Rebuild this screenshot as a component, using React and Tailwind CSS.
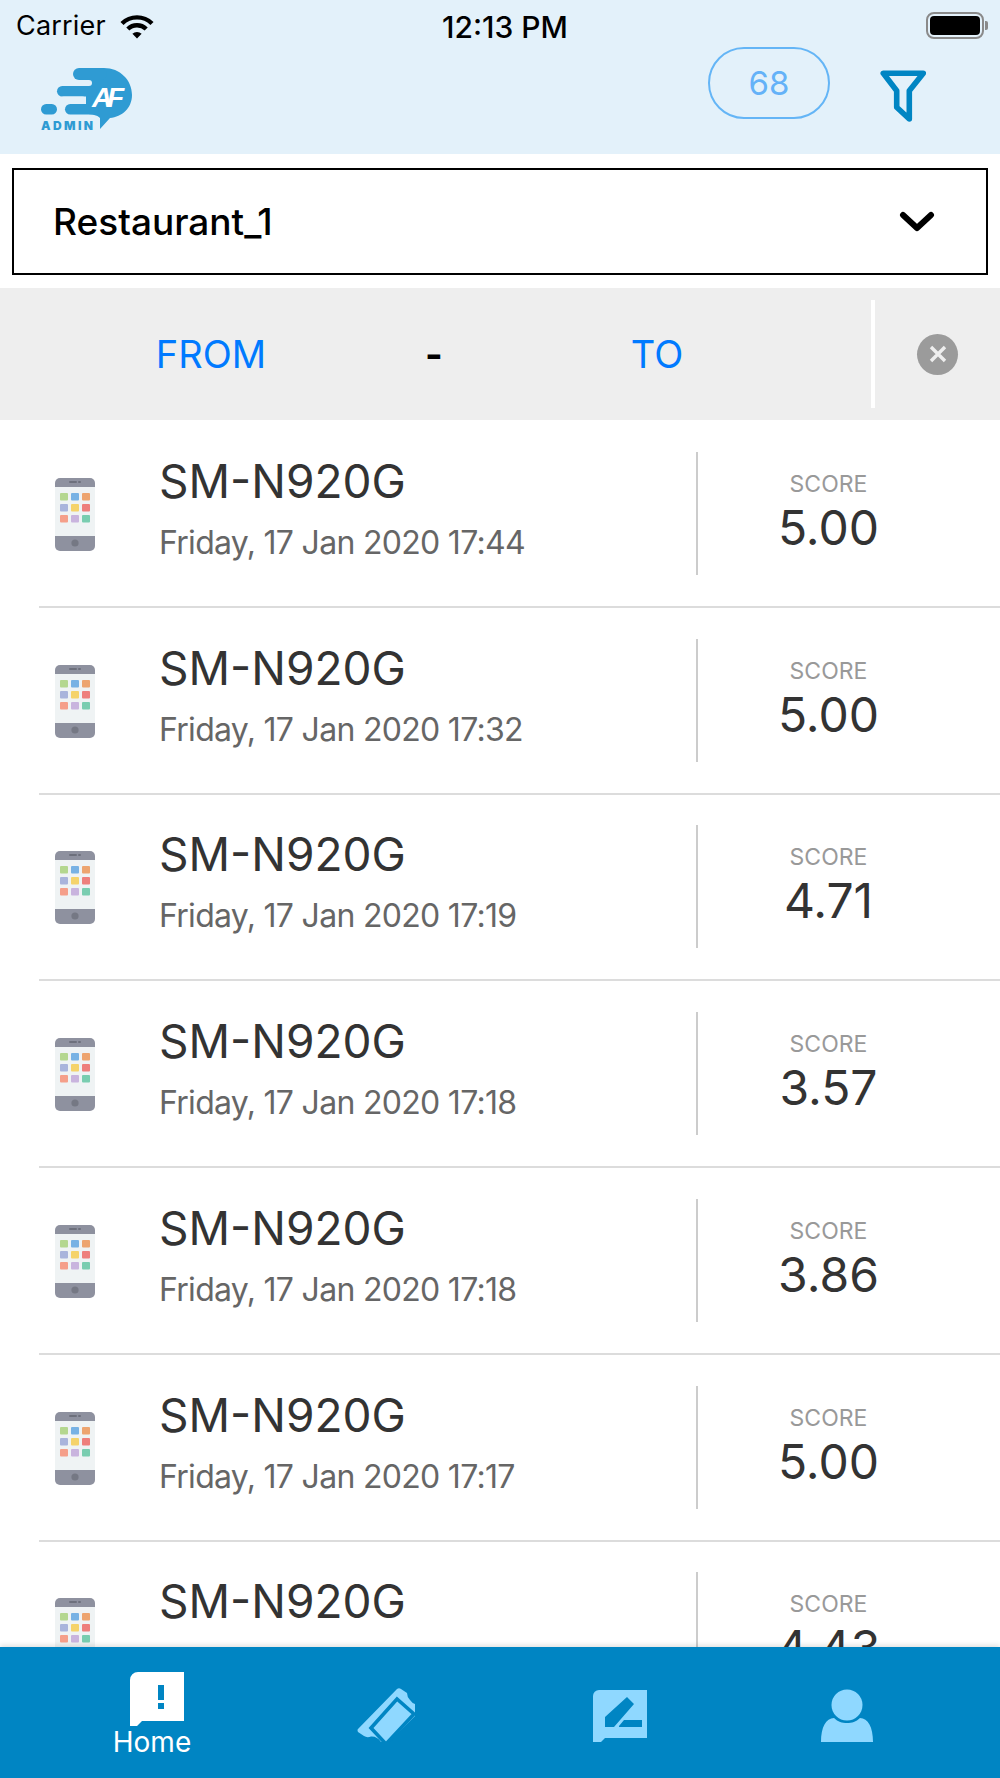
// App.jsx
import React from "react";

const FONT = "[font-family:Inter,'Noto_Sans',sans-serif]";

const DEVICES = [
  { date: "Friday, 17 Jan 2020 17:44", score: "5.00" },
  { date: "Friday, 17 Jan 2020 17:32", score: "5.00" },
  { date: "Friday, 17 Jan 2020 17:19", score: "4.71" },
  { date: "Friday, 17 Jan 2020 17:18", score: "3.57" },
  { date: "Friday, 17 Jan 2020 17:18", score: "3.86" },
  { date: "Friday, 17 Jan 2020 17:17", score: "5.00" },
  { date: "Friday, 17 Jan 2020 17:16", score: "4.43" },
];

const APP_COLORS = [
  "#b4d78f", "#78b2e4", "#eda46f",
  "#a9b4dc", "#f5d36b", "#ee7f7c",
  "#f59f8a", "#c9b4de", "#79cdb0",
];

const PhoneIcon = () => (
  <svg width="40" height="73" viewBox="0 0 40 73" className="shrink-0">
    <path d="M0 9V5a5 5 0 0 1 5-5h30a5 5 0 0 1 5 5v4z" fill="#8e919f" />
    <rect x="0" y="9" width="40" height="49" fill="#eff3f4" />
    <path d="M0 58h40v10a5 5 0 0 1-5 5H5a5 5 0 0 1-5-5z" fill="#8e919f" />
    <rect x="14" y="3" width="8" height="2" rx="1" fill="#6d707c" />
    <rect x="23" y="3" width="3" height="2" rx="1" fill="#6d707c" />
    <circle cx="20" cy="65" r="3.6" fill="#757884" />
    {APP_COLORS.map((color, i) => (
      <rect
        key={color}
        x={5 + (i % 3) * 11}
        y={15 + Math.floor(i / 3) * 11}
        width="8"
        height="7.5"
        rx="1"
        fill={color}
      />
    ))}
  </svg>
);

const Logo = () => (
  <svg width="100" height="70" viewBox="38 65 100 70" className="shrink-0">
    <g fill="#2f9bd3">
      <path d="M90 68H104C120 68 132 80 132 95C132 108 122 117 110 118L100 129V118C97 115 92 114 86 114V68Z" />
      <rect x="73" y="68" width="34" height="12" rx="6" />
      <rect x="57" y="86" width="40" height="10.5" rx="5.2" />
      <rect x="65" y="104" width="34" height="10.5" rx="5.2" />
      <rect x="41" y="104" width="16" height="10.5" rx="5.2" />
    </g>
    <rect x="60" y="80" width="32" height="6" rx="3" fill="#e3f1fa" />
    <rect x="60" y="96.5" width="26" height="7.5" rx="3.7" fill="#e3f1fa" />
    <text x="92" y="107" fontFamily="Liberation Sans" fontWeight="700" fontStyle="italic" fontSize="28" fill="#ffffff" textLength="32">AF</text>
    <text x="41" y="129.5" fontFamily="Inter" fontWeight="900" fontSize="12" fill="#2f9bd3" textLength="52">ADMIN</text>
  </svg>
);

const WifiIcon = () => (
  <svg width="34" height="25" viewBox="0 0 34 25" fill="none" stroke="#000" strokeWidth="4.4">
    <path d="M2 9.5A21.5 21.5 0 0 1 32 9.5" />
    <path d="M7.8 15A13.2 13.2 0 0 1 26.2 15" />
    <path d="M12.4 19.8L17 24.5L21.6 19.8A6.6 6.6 0 0 0 12.4 19.8Z" fill="#000" stroke="none" />
  </svg>
);

const TicketIcon = () => (
  <svg width="58" height="54" viewBox="0 0 58 54">
    <path
      fill="#8fd8ff"
      d="M1 41L40 1Q42 -0.5 44 1L50 5Q50 9 53 12Q55 15 58 16V28L32 54H24Q20 48 14 48.5Q10 50 7 48L1 44Q0 42 1 41Z"
    />
    <path d="M14 40L40 11L57 26L29 56Z" fill="none" stroke="#0085c3" strokeWidth="3.6" />
  </svg>
);

const Row = ({ date, score }) => (
  <div className="h-[186.75px] shrink-0 pl-[39px]">
    <div className="h-full flex items-center border-b-2 border-[#dcdcdc]">
      <div className="w-[120px] pl-[16px] pt-[2px]">
        <PhoneIcon />
      </div>
      <div className="w-[537px] flex flex-col -mt-[10px]">
        <span className="text-[46px] leading-[54px] text-[#333333]">SM-N920G</span>
        <span className="text-[32px] leading-[40px] tracking-[-0.7px] text-[#666666] mt-[15px] whitespace-nowrap">{date}</span>
      </div>
      <div className="h-[123px] border-l-2 border-[#cccccc] flex-1 flex flex-col items-center pr-[41px]">
        <span className="text-[23px] leading-[28px] text-[#999999] mt-[18px]">SCORE</span>
        <span className="text-[48px] leading-[56px] text-[#333333] mt-[2px]">{score}</span>
      </div>
    </div>
  </div>
);

const App = () => {
  return (
    <div className={`w-[1000px] h-[1778px] bg-white flex flex-col overflow-hidden ${FONT}`}>
      <header className="h-[154px] bg-[#e3f1fa] shrink-0">
        <div className="h-[47px] grid grid-cols-[1fr_auto_1fr] items-center pl-[16px] pr-[12px]">
          <div className="flex items-center gap-[14px] pt-[3px]">
            <span className="text-[27px] text-black tracking-[0.2px]">Carrier</span>
            <WifiIcon />
          </div>
          <span className="text-[30px] font-medium text-black pl-[6px] pt-[5px]">12:13 PM</span>
          <div className="flex justify-end items-center">
            <div className="w-[58px] h-[27px] border-2 border-[#8a8a8a] rounded-[8px] p-[2px]">
              <div className="w-full h-full bg-black rounded-[4px]" />
            </div>
            <div className="w-[3px] h-[9px] bg-[#8a8a8a] rounded-r-[2px] ml-[1px]" />
          </div>
        </div>
        <div className="flex items-start pl-[38px]">
          <div className="mt-[18px]">
            <Logo />
          </div>
          <div className="ml-[570px] w-[122px] h-[72px] rounded-full border-2 border-[#64b5f6] flex items-center justify-center text-[33px] text-[#64b2f8] pt-[2px]">
            68
          </div>
          <svg width="46" height="52" viewBox="0 0 46 52" fill="none" stroke="#0085c3" strokeWidth="5.6" strokeLinejoin="round" className="mt-[23px] ml-[50px]">
            <path d="M3.3 3.3H43.3L29.3 20.7V49L16.7 37.3V20.7Z" />
          </svg>
        </div>
      </header>

      <div className="mx-[12px] mt-[14px] h-[107px] border-2 border-black flex items-center justify-between pl-[39px] pr-[51px] shrink-0">
        <span className="text-[37px] text-black font-medium">Restaurant_1</span>
        <svg width="36" height="22" viewBox="0 0 36 22" fill="none" stroke="#000" strokeWidth="6" strokeLinecap="round" strokeLinejoin="round">
          <path d="M4 4L18 17L32 4" />
        </svg>
      </div>

      <div className="mt-[13px] h-[132px] bg-[#eeeeee] flex items-center shrink-0">
        <div className="w-[871px] flex items-center">
          <span className="w-[422px] text-center text-[38px] text-[#007aff]">FROM</span>
          <span className="w-[24px] text-center text-[38px] font-bold text-black">-</span>
          <span className="w-[422px] text-center text-[38px] text-[#007aff]">TO</span>
        </div>
        <div className="w-[4px] h-[108px] bg-white" />
        <div className="flex-1 flex items-center justify-center">
          <div className="w-[41px] h-[41px] rounded-full bg-[#9b9b9b] flex items-center justify-center">
            <svg width="18" height="18" viewBox="0 0 18 18" fill="none" stroke="#eeeeee" strokeWidth="3.4">
              <path d="M2 2L16 16M16 2L2 16" />
            </svg>
          </div>
        </div>
      </div>

      <div className="flex-1 min-h-0 overflow-hidden flex flex-col pt-[1px]">
        {DEVICES.map((d, i) => (
          <Row key={i} date={d.date} score={d.score} />
        ))}
      </div>

      <nav className="h-[131px] shrink-0 bg-[#0085c3] flex items-start shadow-[0_-2px_5px_rgba(0,0,0,0.12)] z-10">
        <div className="w-[152px] ml-[76px] mt-[25px] flex flex-col items-center">
          <svg width="54" height="54" viewBox="0 0 54 54" fill="#ffffff" className="ml-[9px]">
            <path fillRule="evenodd" d="M8 0H54V49H12L7 54H0V8A8 8 0 0 1 8 0ZM28 13V28H34V13ZM28 31V37H34V31Z" />
          </svg>
          <span className="text-[28px] leading-[34px] text-white -mt-[1px]">Home</span>
        </div>
        <div className="ml-[129px] mt-[41px]">
          <TicketIcon />
        </div>
        <svg width="54" height="52" viewBox="0 0 54 52" fill="#8fd8ff" fillRule="evenodd" className="ml-[178px] mt-[43px]">
          <path d="M6 0H54V48H12L8 52H0V6A6 6 0 0 1 6 0ZM12 27V37H21L41 14L34 7ZM26 36L31 30H49V37H26Z" />
        </svg>
        <svg width="52" height="53" viewBox="0 0 52 53" fill="#8fd8ff" className="ml-[174px] mt-[42px]">
          <circle cx="26" cy="16" r="15.5" />
          <path d="M0 53C0 38 5 29 13 29C17 33 21 34 26 34C31 34 35 33 39 29C47 29 52 38 52 53Z" />
        </svg>
      </nav>
    </div>
  );
};

export default App;
